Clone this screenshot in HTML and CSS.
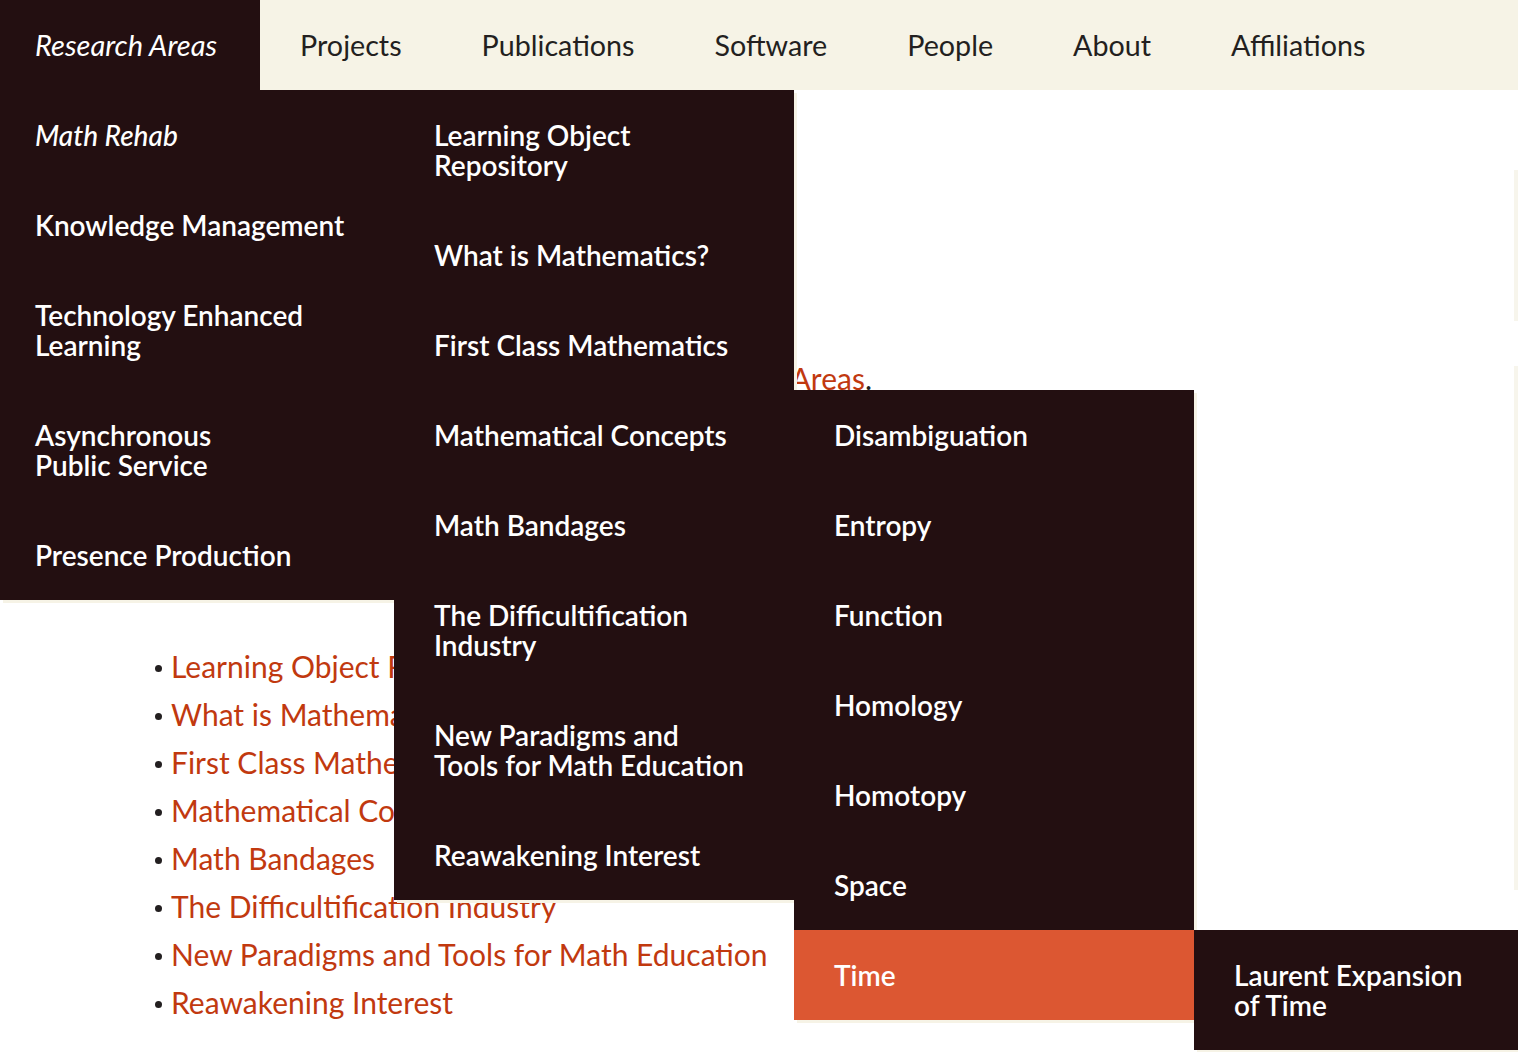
FILE: index.html
```html
<!DOCTYPE html>
<html lang="en">
<head>
<meta charset="utf-8">
<title>Research Areas</title>
<link rel="stylesheet" href="styles.css">
</head>
<body>
<header class="topbar">
  <nav class="mainnav">
    <div class="nav-item has-menu">
      <a class="nav-link active" href="#">Research Areas</a>
      <ul class="menu menu-1">
        <li class="has-menu">
          <a class="menu-link current" href="#">Math Rehab</a>
          <ul class="menu menu-2">
            <li><a class="menu-link" href="#">Learning Object Repository</a></li>
            <li><a class="menu-link" href="#">What is Mathematics?</a></li>
            <li><a class="menu-link" href="#">First Class Mathematics</a></li>
            <li class="has-menu">
              <a class="menu-link" href="#">Mathematical Concepts</a>
              <ul class="menu menu-3">
                <li><a class="menu-link" href="#">Disambiguation</a></li>
                <li><a class="menu-link" href="#">Entropy</a></li>
                <li><a class="menu-link" href="#">Function</a></li>
                <li><a class="menu-link" href="#">Homology</a></li>
                <li><a class="menu-link" href="#">Homotopy</a></li>
                <li><a class="menu-link" href="#">Space</a></li>
                <li class="has-menu">
                  <a class="menu-link hover" href="#">Time</a>
                  <ul class="menu menu-4">
                    <li><a class="menu-link" href="#">Laurent Expansion<br>of Time</a></li>
                  </ul>
                </li>
              </ul>
            </li>
            <li><a class="menu-link" href="#">Math Bandages</a></li>
            <li><a class="menu-link" href="#">The Difficultification Industry</a></li>
            <li><a class="menu-link" href="#">New Paradigms and<br>Tools for Math Education</a></li>
            <li><a class="menu-link" href="#">Reawakening Interest</a></li>
          </ul>
        </li>
        <li><a class="menu-link" href="#">Knowledge Management</a></li>
        <li><a class="menu-link" href="#">Technology Enhanced Learning</a></li>
        <li><a class="menu-link" href="#">Asynchronous<br>Public Service</a></li>
        <li><a class="menu-link" href="#">Presence Production</a></li>
      </ul>
    </div>
    <div class="nav-item"><a class="nav-link" href="#">Projects</a></div>
    <div class="nav-item"><a class="nav-link" href="#">Publications</a></div>
    <div class="nav-item"><a class="nav-link" href="#">Software</a></div>
    <div class="nav-item"><a class="nav-link" href="#">People</a></div>
    <div class="nav-item"><a class="nav-link" href="#">About</a></div>
    <div class="nav-item"><a class="nav-link" href="#">Affiliations</a></div>
  </nav>
</header>

<div class="page">
  <main class="content">
    <p class="intro">See also our <a href="#">Research Areas</a>.</p>
    <ul class="project-list">
      <li><a href="#">Learning Object Repository</a></li>
      <li><a href="#">What is Mathematics?</a></li>
      <li><a href="#">First Class Mathematics</a></li>
      <li><a href="#">Mathematical Concepts</a></li>
      <li><a href="#">Math Bandages</a></li>
      <li><a href="#">The Difficultification Industry</a></li>
      <li><a href="#">New Paradigms and Tools for Math Education</a></li>
      <li><a href="#">Reawakening Interest</a></li>
    </ul>
  </main>
  <aside class="sidebar">
    <div class="side-box side-box-short"></div>
    <div class="side-box side-box-tall"></div>
  </aside>
</div>
</body>
</html>
```

FILE: styles.css
```css
html, body {
  margin: 0;
  padding: 0;
  background: #ffffff;
  overflow: hidden;
}

body {
  font-family: "Lato", "Liberation Sans", sans-serif;
  color: #231f20;
  width: 1518px;
  height: 1052px;
  position: relative;
}

a {
  text-decoration: none;
  color: inherit;
}

ul {
  list-style: none;
  margin: 0;
  padding: 0;
}

/* ---------- top navigation ---------- */
.topbar {
  background: #f6f3e6;
  height: 90px;
  position: relative;
  z-index: 10;
}

.mainnav {
  display: flex;
  height: 90px;
}

.nav-item {
  position: relative;
  height: 90px;
}

.nav-link {
  display: block;
  height: 90px;
  line-height: 90px;
  padding: 0 40px;
  font-size: 28.7px;
  color: #231f20;
  white-space: nowrap;
}

.nav-link.active {
  background: #230f11;
  color: #ffffff;
  font-style: italic;
  font-size: 29px;
  padding: 0 43px 0 35px;
}

/* ---------- dropdown menus ---------- */
.menu {
  position: absolute;
  background: #230f11;
  box-shadow: 3px 3px 0 #f6f3e6;
}

.menu-1 {
  top: 90px;
  left: 0;
  width: 394px;
}

.menu-2,
.menu-3,
.menu-4 {
  top: 0;
  left: 100%;
  width: 400px;
}

.has-menu {
  position: relative;
}

.menu-link {
  display: block;
  padding: 30px 40px 30px 40px;
  line-height: 30px;
  font-size: 28px;
  font-weight: 600;
  color: #ffffff;
}

.menu-1 > li > .menu-link {
  padding-left: 35px;
  padding-right: 35px;
}

.menu-link.current {
  font-style: italic;
  font-weight: 500;
}

.menu-link.hover {
  background: #dc5732;
}

/* ---------- page content ---------- */
.page {
  display: grid;
  grid-template-columns: 1514px 200px;
}

.content {
  padding: 264px 0 0 155px;
}

.intro {
  width: 717px;
  margin: 0;
  text-align: right;
  font-size: 30px;
  line-height: 48px;
  color: #231f20;
  white-space: nowrap;
}

.intro a,
.project-list a {
  color: #c1390f;
}

.project-list {
  margin-top: 240px;
  font-size: 30px;
  line-height: 48px;
}

.project-list li::before {
  content: "";
  display: inline-block;
  width: 7px;
  height: 7px;
  border-radius: 50%;
  background: #231f20;
  vertical-align: middle;
  margin: 0 9px 4px 0;
}

.sidebar {
  padding-top: 80px;
  display: flex;
  flex-direction: column;
  gap: 45px;
}

.side-box {
  background: #f7f5ec;
}

.side-box-short {
  height: 151px;
}

.side-box-tall {
  height: 524px;
}
```
